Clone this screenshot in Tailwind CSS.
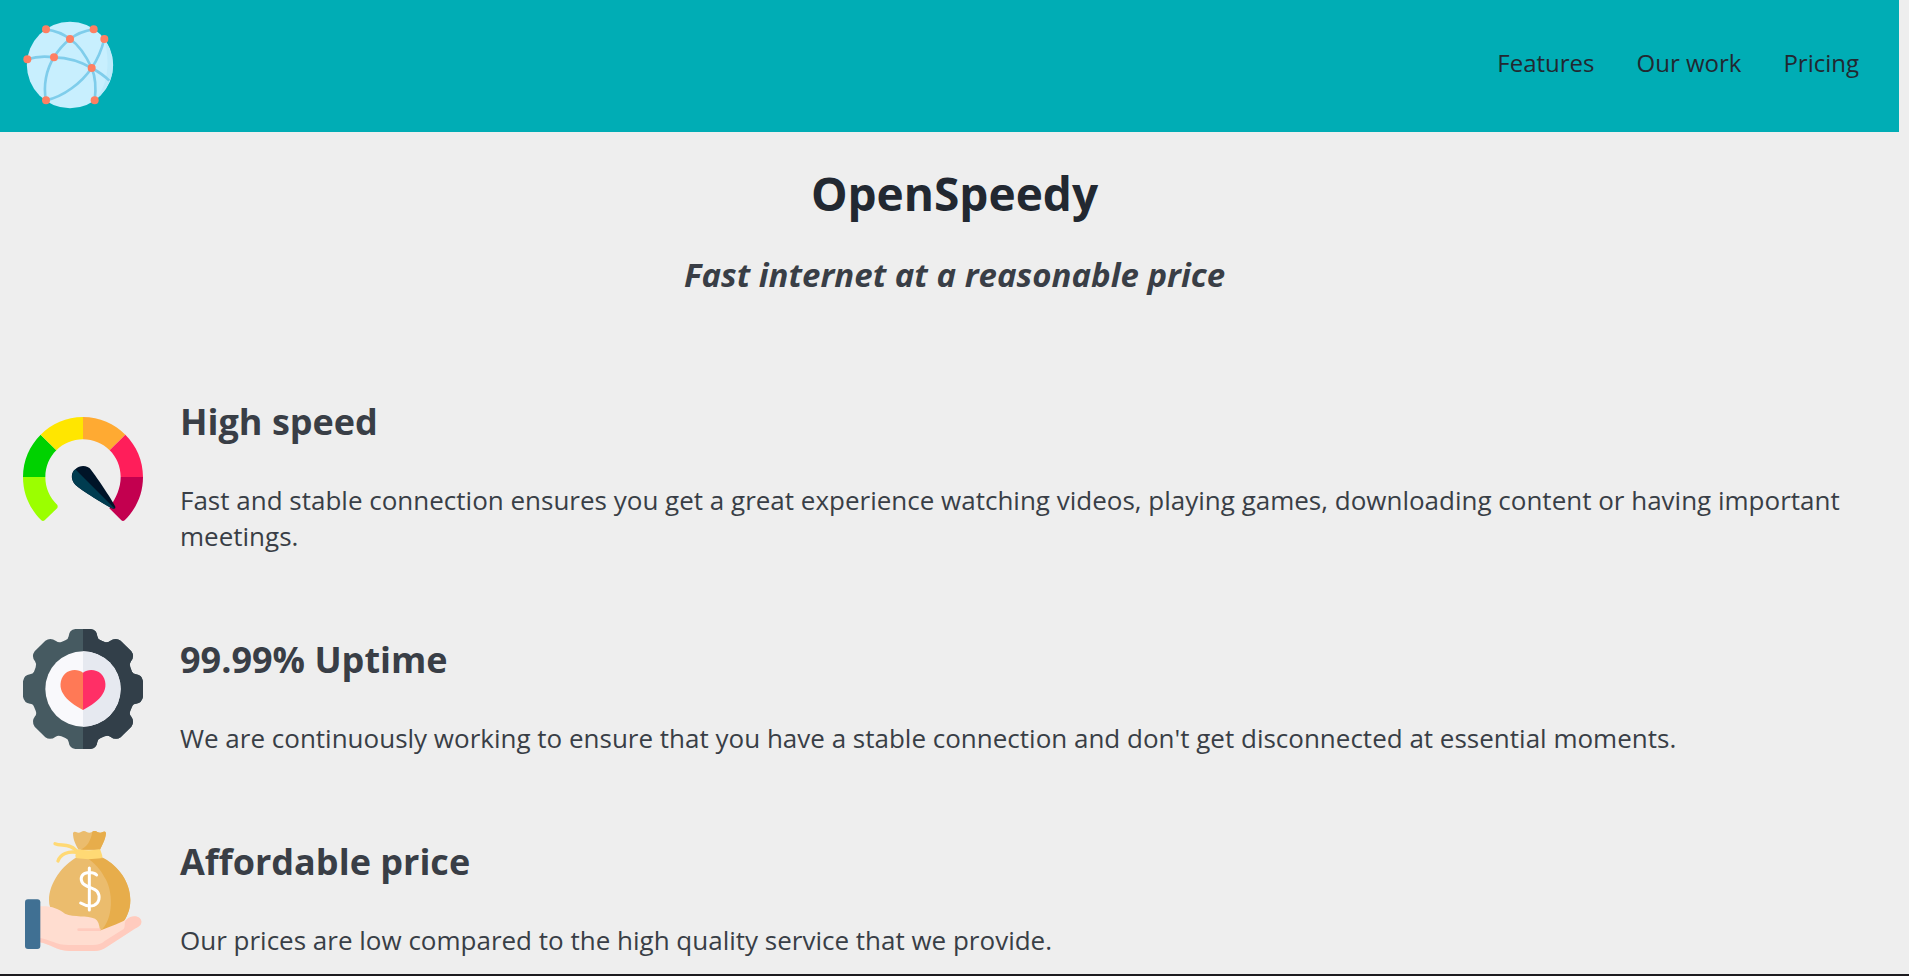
<!DOCTYPE html>
<html lang="en">
<head>
<meta charset="utf-8">
<meta name="viewport" content="width=device-width, initial-scale=1">
<title>OpenSpeedy</title>
<script src="https://cdn.jsdelivr.net/npm/@tailwindcss/browser@4"></script>
</head>
<body class="flex min-h-screen flex-col border-b-2 border-[#1c1b1f] bg-[#eeeeee] font-['Open_Sans','Noto_Sans',sans-serif] text-[26px] leading-9 text-[#393e46]">

<header class="mr-[10px] flex items-center justify-between bg-[#00adb5] py-5 pr-10 pl-[23px]">
  <a href="#" aria-label="OpenSpeedy home">
    <svg class="size-[92px]" viewBox="69 60 276 276" aria-hidden="true">
      <circle cx="210" cy="195" r="129.500" fill="#c8effe"/>
      <path d="M313 117C345 165 347 225 318 264C305 284 292 296 284 301C323 258 332 190 313 117Z" fill="#bdeafb"/>
      <g fill="none" stroke="#7fcdeb" stroke-width="8">
        <path d="M138 88C166 92 188 100 210 117C239 137 258 167 275 204C287 232 288 270 284 301"/>
        <path d="M281 88C253 92 230 101 210 117C190 133 175 150 162 172C139 208 129 257 138 301"/>
        <path d="M82 178C109 169 136 168 162 172C203 173 243 185 275 204C295 215 314 228 328 242"/>
        <path d="M313 117C305 149 293 178 275 204C245 248 191 290 138 301"/>
      </g>
      <g fill="#ff7f62">
        <circle cx="138" cy="88" r="12"/><circle cx="281" cy="88" r="12"/>
        <circle cx="313" cy="117" r="12"/><circle cx="210" cy="117" r="12"/>
        <circle cx="162" cy="172" r="12"/><circle cx="82" cy="178" r="12"/>
        <circle cx="275" cy="204" r="12"/><circle cx="138" cy="301" r="12"/><circle cx="284" cy="301" r="12"/>
      </g>
    </svg>
  </a>
  <nav class="pb-1.5">
    <ul class="flex gap-[42px] text-[24px] text-[#222831]">
      <li><a href="#features">Features</a></li>
      <li><a href="#work">Our work</a></li>
      <li><a href="#pricing">Pricing</a></li>
    </ul>
  </nav>
</header>

<main>
  <section class="pt-[29px] text-center">
    <h1 class="text-[46px] leading-16 font-bold text-[#222831]">OpenSpeedy</h1>
    <p class="mt-[26px] text-[33px] leading-12 font-bold italic">Fast internet at a reasonable price</p>
  </section>

  <section id="features" class="mt-[83px] flex flex-col gap-16 pr-9 pl-[23px]">
    <article class="flex items-center gap-[37px]">
      <svg class="size-[120px] shrink-0" viewBox="69 57 360 360" aria-hidden="true">
        <path d="M69 261H136C136 294 149 322 172 345Q174 350 172 354L134 391Q129 395 124 391C90 357 69 313 69 261Z" fill="#9bff00"/>
        <path d="M69 261C69 211 89 167 122 134L169 181C149 201 136 229 136 261Z" fill="#00d200"/>
        <path d="M122 134C155 101 199 81 249 81V148C218 148 190 160 169 181Z" fill="#ffe600"/>
        <path d="M249 81C299 81 343 101 376 134L329 181C308 160 280 148 249 148Z" fill="#ffaa32"/>
        <path d="M376 134C409 167 429 211 429 261H362C362 229 349 201 329 181Z" fill="#ff1e5a"/>
        <path d="M429 261C429 313 408 357 374 391Q369 395 364 391L328 355C349 322 362 294 362 261Z" fill="#c3004f"/>
        <path d="M226 284C210 268 214 246 226 238C240 224 263 226 273 239C281 249 335 326 346 350Q348 357 340 356C326 351 241 299 226 284Z" fill="#001428"/>
        <path d="M226 238L343 355Q341 357 336 355C322 349 241 299 226 284C212 270 214 247 226 238Z" fill="#003c50"/>
      </svg>
      <div class="pt-4 pb-0.5">
        <h2 class="text-[36px] leading-12 font-bold">High speed</h2>
        <p class="mt-9">Fast and stable connection ensures you get a great experience watching videos, playing games, downloading content or having important meetings.</p>
      </div>
    </article>

    <article class="flex items-center gap-[37px]">
      <svg class="size-[120px] shrink-0" viewBox="69 57 360 360" aria-hidden="true">
        <defs>
          <path id="gear" d="M226 57H272Q291 60 292 79Q293 88 302 91L314 96Q323 99 330 93Q347 81 362 92L394 124Q405 139 393 154Q387 162 391 172L396 185Q399 192 408 193Q426 195 429 214V260Q426 278 408 281Q399 281 396 290L391 302Q387 312 393 319Q405 335 394 350L362 382Q347 392 331 380Q323 375 314 379L302 384Q293 387 292 396Q290 414 272 417H226Q208 414 206 396Q205 387 196 384L184 379Q175 375 167 380Q151 392 136 382L104 350Q93 335 105 319Q111 312 107 302L102 290Q99 281 90 281Q72 278 69 260V214Q72 195 90 193Q99 192 102 185L107 172Q111 162 105 154Q93 139 104 124L136 92Q151 81 168 93Q175 99 184 96L196 91Q205 88 206 79Q207 60 226 57Z"/>
          <clipPath id="right-half"><path d="M249 57H429V417H249Z"/></clipPath>
        </defs>
        <use href="#gear" fill="#465a61"/>
        <use href="#gear" fill="#323f49" clip-path="url(#right-half)"/>
        <circle cx="249" cy="237" r="113" fill="#f9f9fc"/>
        <path d="M249 124A113 113 0 0 1 249 350Z" fill="#e6e9f0"/>
        <path d="M249 188C235 177 210 177 195 191C178 208 178 235 190 252C202 272 224 287 249 300Z" fill="#ff7956"/>
        <path d="M249 188C263 177 288 177 303 191C320 208 320 235 308 252C296 272 274 287 249 300Z" fill="#ff2f66"/>
      </svg>
      <div class="pt-4 pb-0.5">
        <h2 class="text-[36px] leading-12 font-bold">99.99% Uptime</h2>
        <p class="mt-9">We are continuously working to ensure that you have a stable connection and don't get disconnected at essential moments.</p>
      </div>
    </article>

    <article id="pricing" class="flex items-center gap-[37px]">
      <svg class="size-[120px] shrink-0" viewBox="69 63 360 360" aria-hidden="true">
        <path d="M219 69Q222 63 228 66Q236 71 243 66Q252 60 260 66Q268 71 276 66Q284 60 292 66Q301 70 308 66Q317 62 318 70C316 90 306 106 300 119H236C227 105 219 89 219 69Z" fill="#ebbc6d"/>
        <path d="M277 65Q284 60 292 66Q301 70 308 66Q317 62 318 70C316 90 306 106 300 119H240C260 113 273 92 277 65Z" fill="#e7ad4b"/>
        <path d="M232 141H305C355 166 391 218 391 270C391 301 380 322 366 342L300 364L160 300Q147 296 147 270C148 218 187 165 232 141Z" fill="#ebbc6d"/>
        <path d="M262 145H310C357 169 391 218 391 270C391 301 380 322 366 342L300 364C343 329 340 240 313 201C302 179 283 159 262 145Z" fill="#e7ad4b"/>
        <g fill="none" stroke="#ffd974" stroke-width="10" stroke-linecap="round">
          <path d="M165 101C183 109 209 99 228 121"/>
          <path d="M230 127C205 123 181 132 174 153"/>
        </g>
        <path d="M234 118Q266 124 298 118Q302 119 303 125L307 138Q308 144 300 145Q266 150 232 145Q225 144 226 137L229 123Q230 118 234 118Z" fill="#ffd974"/>
        <path d="M290 195C283 188 272 187 262 188C246 190 240 203 246 216C253 232 281 231 292 245C302 260 298 279 282 286C267 291 252 285 242 279M268 174V300" fill="none" stroke="#fff" stroke-width="9" stroke-linecap="round" stroke-linejoin="round"/>
        <path d="M120 289C148 286 174 294 195 311C222 323 262 315 285 326Q299 334 299 362C333 350 363 337 389 324C407 313 428 325 423 340C421 349 412 352 402 358L318 412Q304 423 282 423H207C171 423 148 401 120 397Z" fill="#ffddd0"/>
        <path d="M120 384C150 389 169 405 205 405H279Q300 405 315 392L371 357Q375 353 374 345Q372 337 379 329C398 311 427 319 424 338C423 347 413 351 403 357L319 412Q305 423 282 423H207C171 423 148 401 120 397Z" fill="#ffcbbe"/>
        <path d="M236 359H298" fill="none" stroke="#ffcbbe" stroke-width="8" stroke-linecap="round"/>
        <rect x="75" y="268" width="46" height="149" rx="9" fill="#407093"/>
      </svg>
      <div class="pt-4 pb-0.5">
        <h2 class="text-[36px] leading-12 font-bold">Affordable price</h2>
        <p class="mt-9">Our prices are low compared to the high quality service that we provide.</p>
      </div>
    </article>
  </section>
</main>
</body>
</html>
